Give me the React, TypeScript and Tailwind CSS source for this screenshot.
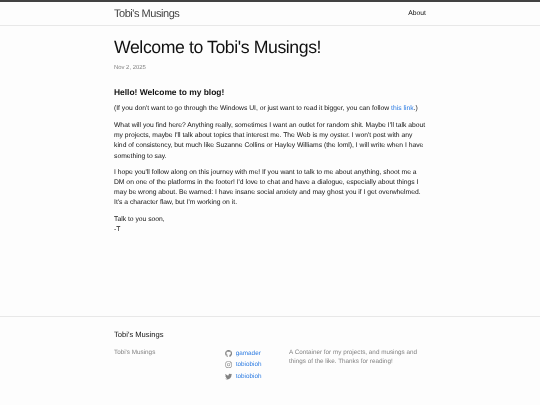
import { FaGithub, FaInstagram, FaTwitter } from "react-icons/fa";

const socials = [
  { icon: FaGithub, name: "gamader" },
  { icon: FaInstagram, name: "tobiobioh" },
  { icon: FaTwitter, name: "tobiobioh" },
];

export default function App() {
  return (
    <div className="flex min-h-screen flex-col bg-[#fdfdfd] font-['Liberation_Sans',Arial,sans-serif] text-[6.75px] leading-[10.1px] text-[#111111] blur-[0.4px] [text-rendering:geometricPrecision]">
      <header className="h-[25.8px] border-t-[2.1px] border-b border-t-[#424242] border-b-[#e8e8e8]">
        <div className="mx-auto flex w-[312px] items-center justify-between">
          <span className="text-[11px] leading-[24px] tracking-[-0.46px] text-[#424242]">
            Tobi's Musings
          </span>
          <a className="text-[6.75px] leading-[24px] text-[#111111]">About</a>
        </div>
      </header>

      <main className="flex-1 pt-[13.3px]">
        <div className="mx-auto w-[312px]">
          <h1 className="text-[17.7px] leading-[17.7px] tracking-[-0.42px]">
            Welcome to Tobi's Musings!
          </h1>
          <p className="mt-[6.3px] text-[5.9px] leading-[10.1px] text-[#828282]">Nov 2, 2025</p>

          <h3 className="mt-[12.6px] mb-[6.4px] text-[8.44px] leading-[12px] font-bold">
            Hello! Welcome to my blog!
          </h3>
          <p className="mb-[7px]">
            (If you don't want to go through the Windows UI, or just want to read it bigger, you can follow{" "}
            <a className="text-[#2a7ae2]">this link</a>.)
          </p>
          <p className="mb-[6.3px]">
            What will you find here? Anything really, sometimes I want an outlet for random shit. Maybe I'll talk about
            my projects, maybe I'll talk about topics that interest me. The Web is my oyster. I won't post with any
            kind of consistency, but much like Suzanne Collins or Hayley Williams (the loml), I will write when I have
            something to say.
          </p>
          <p className="mb-[6.3px]">
            I hope you'll follow along on this journey with me! If you want to talk to me about anything, shoot me a
            DM on one of the platforms in the footer! I'd love to chat and have a dialogue, especially about things I
            may be wrong about. Be warned: I have insane social anxiety and may ghost you if I get overwhelmed.
            It's a character flaw, but I'm working on it.
          </p>
          <p>
            Talk to you soon,
            <br />
            -T
          </p>
        </div>
      </main>

      <footer className="h-[89.5px] border-t border-[#e8e8e8] pt-[12.66px]">
        <div className="mx-auto w-[312px]">
          <h2 className="mb-[7px] text-[7.6px] leading-[11.4px]">Tobi's Musings</h2>
          <div className="flex text-[6.33px] leading-[9.5px] text-[#828282]">
            <div className="w-[111px]">Tobi's Musings</div>
            <ul className="w-[64px]">
              {socials.map(({ icon: Icon, name }, i) => (
                <li key={i} className="flex h-[11.6px] items-center gap-[3.6px]">
                  <Icon className="h-[7.2px] w-[7.2px] text-[#828282]" />
                  <a className="text-[#2a7ae2]">{name}</a>
                </li>
              ))}
            </ul>
            <p className="w-[132px]">
              A Container for my projects, and musings and things of the like. Thanks for reading!
            </p>
          </div>
        </div>
      </footer>
    </div>
  );
}
